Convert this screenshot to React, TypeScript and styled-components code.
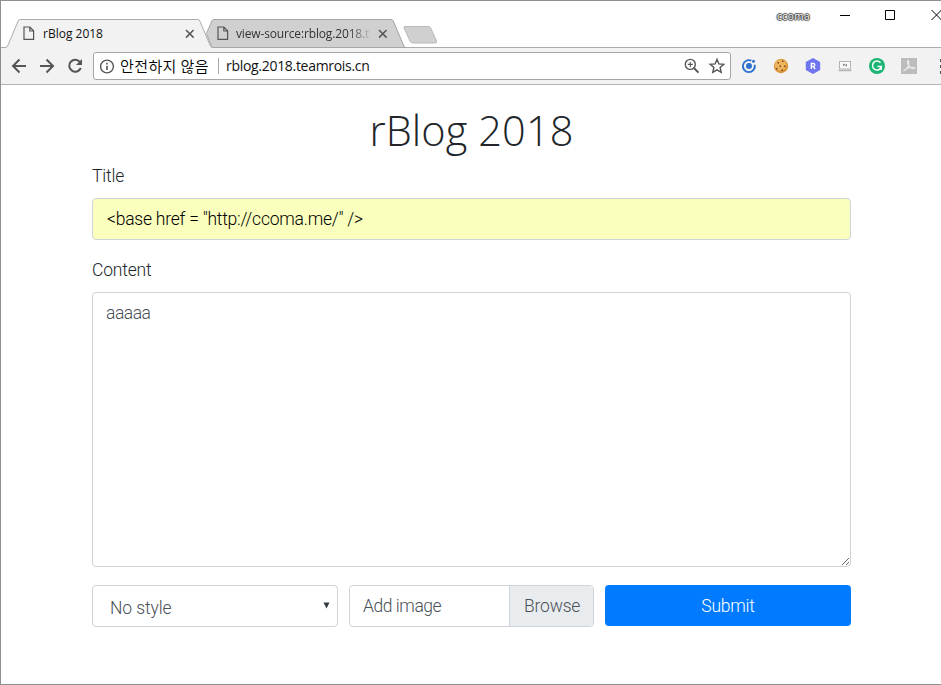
import React from 'react';
import styled, { createGlobalStyle } from 'styled-components';

const Global = createGlobalStyle`
  * { box-sizing: border-box; }
  body { margin: 0; background: #fff; overflow: hidden; }
`;

const uiFont = `"Open Sans", "Noto Sans CJK KR", sans-serif`;
const pageFont = `Roboto, "Liberation Sans", sans-serif`;

const Window = styled.div`
  width: 941px;
  height: 685px;
  display: flex;
  flex-direction: column;
  background: #fff;
  border: 1px solid #8f8f8f;
  border-right: 0;
  overflow: hidden;
`;

const TitleBar = styled.header`
  height: 47px;
  flex: none;
  display: flex;
  justify-content: space-between;
  border-bottom: 1px solid #acacac;
  font-family: ${uiFont};
`;

const Tabs = styled.div`
  display: flex;
  align-items: flex-start;
  padding: 18px 0 0 5px;
`;

const TabBox = styled.div<{ $width: number; $front?: boolean }>`
  position: relative;
  width: ${p => p.$width}px;
  height: 29px;
  flex: none;
  display: flex;
  align-items: center;
  z-index: ${p => (p.$front ? 1 : 0)};
  padding: ${p => (p.$front ? '0 11px 0 17px' : '0 18px 0 11px')};
`;

const TabShape = styled.svg`
  position: absolute;
  inset: 0;
  z-index: -1;
`;

const TabText = styled.span<{ $faded?: boolean }>`
  flex: 1;
  min-width: 0;
  margin-left: ${p => (p.$faded ? 7 : 8)}px;
  height: 18px;
  line-height: 18px;
  font-size: 12px;
  letter-spacing: ${p => (p.$faded ? '-0.15px' : '0')};
  color: ${p => (p.$faded ? '#333' : '#111')};
  white-space: nowrap;
  overflow: hidden;
  ${p => p.$faded && 'mask-image: linear-gradient(to right, #000 112px, transparent 137px);'}
`;

const NewTab = styled.svg`
  flex: none;
  margin: 6px 0 0 -4px;
`;

const WindowControls = styled.div`
  display: flex;
  align-items: flex-start;
`;

const UserName = styled.span`
  margin: 8px 29px 0 0;
  font-size: 10px;
  line-height: 14px;
  letter-spacing: 0.5px;
  color: #fff;
  text-shadow: 0 0 1px #222, 0 1px 1px #444, 1px 0 1px #444, -1px 0 1px #444, 0 -1px 1px #444;
`;

const Controls = styled.svg`
  display: block;
  flex: none;
`;

const Toolbar = styled.nav`
  height: 37px;
  flex: none;
  display: flex;
  align-items: center;
  background: #f2f2f2;
  border-bottom: 1px solid #b4b4b4;
`;

const NavIcons = styled.svg`
  flex: none;
  width: 92px;
  height: 36px;
`;

const AddressBar = styled.div`
  width: 638px;
  height: 28px;
  flex: none;
  display: flex;
  align-items: center;
  padding: 0 5px 0 6px;
  background: #fff;
  border: 1px solid #a6a6a6;
  border-radius: 3px;
  font-family: ${uiFont};
  color: #111;
`;

const Security = styled.span`
  width: 98px;
  flex: none;
  margin-left: 5px;
  font-size: 15px;
  font-family: "Noto Sans CJK KR", sans-serif;
  font-weight: 350;
  color: #000;
  line-height: 20px;
  letter-spacing: 0.4px;
  white-space: nowrap;
`;

const Divider = styled.span`
  width: 1px;
  height: 16px;
  flex: none;
  margin: 0 7px 0 0;
  background: #aaa;
`;

const Url = styled.span`
  flex: 1;
  font-size: 14px;
  line-height: 20px;
  letter-spacing: -0.3px;
`;

const Extensions = styled.svg`
  flex: none;
  width: 210px;
  height: 36px;
`;

const Page = styled.main`
  flex: 1;
  padding: 20px 0 0 91px;
  font-family: ${pageFont};
  font-weight: 300;
  color: #212529;
`;

const Form = styled.form`
  width: 759px;
  display: flex;
  flex-direction: column;
`;

const Heading = styled.h1`
  margin: 0 0 8px;
  height: 51px;
  line-height: 50px;
  text-align: center;
  font-family: "Open Sans", sans-serif;
  font-size: 41.5px;
  font-weight: 350;
  letter-spacing: 0.1px;
`;

const Label = styled.label`
  height: 27px;
  margin-bottom: 7px;
  line-height: 25px;
  font-size: 17.5px;
  letter-spacing: -0.2px;
`;

const fieldStyle = `
  border: 1px solid #ced4da;
  border-radius: 4px;
  background: #fff;
  font-family: ${pageFont};
  font-weight: 300;
  font-size: 17.5px;
  color: #495057;
  outline: none;
`;

const TitleInput = styled.input`
  ${fieldStyle}
  height: 42px;
  margin-bottom: 18px;
  padding: 0 14px 1px;
  background: #faffbd;
  color: #000;
  letter-spacing: -0.23px;
`;

const ContentArea = styled.textarea`
  ${fieldStyle}
  display: block;
  height: 275px;
  margin: 0 0 18px;
  padding: 7px 13px;
  line-height: 27px;
  letter-spacing: -0.5px;
  resize: both;
`;

const Actions = styled.div`
  display: grid;
  grid-template-columns: 246px 245px 246px;
  column-gap: 11px;
  align-items: start;
`;

const SelectBox = styled.div`
  ${fieldStyle}
  height: 42px;
  display: flex;
  align-items: center;
  padding-right: 7px;
`;

const Select = styled.select`
  appearance: none;
  flex: 1;
  height: 36px;
  padding: 3px 0 0 17px;
  border: 0;
  background: none;
  font: inherit;
  color: inherit;
  letter-spacing: -0.1px;
`;

const FilePicker = styled.div`
  ${fieldStyle}
  height: 42px;
  display: flex;
  line-height: 40px;
  overflow: hidden;
`;

const FileName = styled.span`
  flex: 1;
  padding-left: 13px;
  letter-spacing: -0.45px;
`;

const Browse = styled.span`
  width: 84px;
  padding-left: 14px;
  background: #e9ecef;
  border-left: 1px solid #ced4da;
  letter-spacing: -0.2px;
`;

const Submit = styled.button`
  height: 41px;
  padding: 0;
  border: 0;
  border-radius: 4px;
  background: #007bff;
  color: #fff;
  font-family: ${pageFont};
  font-weight: 300;
  font-size: 17.5px;
  letter-spacing: -0.2px;
`;

const FileIcon = () => (
  <svg width="12" height="15" viewBox="0 0 12 15" fill="none" stroke="#555" strokeWidth="1.2">
    <path d="M1 1h5.8L10.6 4.8V13.4H1z M6.8 1v4h3.8" />
  </svg>
);

const CloseIcon = () => (
  <svg width="10" height="10" viewBox="0 0 10 10" stroke="#5a5a5a" strokeWidth="1.6">
    <path d="M1 1l7.6 7.6M8.6 1L1 8.6" />
  </svg>
);

const InfoIcon = () => (
  <svg width="15" height="15" viewBox="0 0 15 15" fill="none" stroke="#555" strokeWidth="1.4">
    <circle cx="7" cy="7.5" r="6.4" />
    <path d="M7 6.7v4.2M7 3.7v1.7" strokeWidth="1.6" />
  </svg>
);

const BarIcons = () => (
  <svg width="42" height="20" viewBox="0 0 42 20" fill="none" stroke="#555" strokeWidth="1.4">
    <circle cx="7.3" cy="8.4" r="5" />
    <path d="M10.9 12l4.6 4.6" strokeWidth="1.9" />
    <path d="M4.8 8.4h5M7.3 5.9v5" strokeWidth="1.1" />
    <path d="M34 3.4l1.9 4.5 4.9.4-3.7 3.2 1.1 4.8-4.2-2.5-4.2 2.5 1.1-4.8-3.7-3.2 4.9-.4z" />
  </svg>
);

export default function App() {
  return (
    <Window>
      <Global />
      <TitleBar>
        <Tabs>
          <TabBox $width={200} $front>
            <TabShape width="208" height="29" viewBox="0 0 208 29">
              <path d="M0 29V28.5Q1 28.3 1.6 27L12.2 2Q12.8.5 14.2.5H191.8Q193.2.5 193.8 2L204.4 27Q205 28.5 207 28.5V29z" fill="#f2f2f2" />
              <path d="M-1 28.5Q1 28.3 1.6 27L12.2 2Q12.8.5 14.2.5H191.8Q193.2.5 193.8 2L204.4 27Q205 28.5 207 28.5" fill="none" stroke="#acacac" />
            </TabShape>
            <FileIcon />
            <TabText>rBlog 2018</TabText>
            <CloseIcon />
          </TabBox>
          <TabBox $width={200}>
            <TabShape width="200" height="29" viewBox="0 0 200 29">
              <path d="M.5 14.5L5.8 2Q6.4.5 7.8.5H185.3Q186.7.5 187.3 2L197.9 27Q198.5 28.5 199.5 28.5H6z" fill="#d0d0d0" stroke="#a6a6a6" />
            </TabShape>
            <FileIcon />
            <TabText $faded>view-source:rblog.2018.t</TabText>
            <CloseIcon />
          </TabBox>
          <NewTab width="38" height="20" viewBox="0 0 38 20">
            <path d="M3 1.5H26.5Q28 1.5 28.7 3L34.5 16Q35.2 18 33.5 18H11Q9 18 8.3 16.6L2 3Q1.4 1.5 3 1.5z" fill="#d0d0d0" stroke="#b9b9b9" />
          </NewTab>
        </Tabs>
        <WindowControls>
          <UserName>ccoma</UserName>
          <Controls width="102" height="30" viewBox="0 0 102 30" fill="none" stroke="#000">
            <path d="M1 14.5h10M46.5 9.5h9v9h-9zM92.5 9l10 10M102.5 9l-10 10" />
          </Controls>
        </WindowControls>
      </TitleBar>
      <Toolbar>
        <NavIcons viewBox="0 0 92 36" fill="none" stroke="#555" strokeWidth="2">
          <path d="M25 18H12.5M18.5 11.5L12 18l6.5 6.5M39 18h12.5M45.5 11.5L52 18l-6.5 6.5" />
          <path d="M79.2 14.3A6 6 0 1 0 79.8 20" />
          <path d="M81 11v6h-6z" fill="#555" stroke="none" />
        </NavIcons>
        <AddressBar>
          <InfoIcon />
          <Security>안전하지 않음</Security>
          <Divider />
          <Url>rblog.2018.teamrois.cn</Url>
          <BarIcons />
        </AddressBar>
        <Extensions viewBox="0 0 210 36" fill="none">
          <path d="M20.4 12.7A6 6 0 1 0 23.7 16.8" stroke="#2f72d0" strokeWidth="1.9" />
          <circle cx="18" cy="18" r="3" fill="#2f72d0" />
          <circle cx="22.5" cy="13.3" r="1.5" fill="#2f72d0" />
          <circle cx="50" cy="18" r="7.2" fill="#dc9438" />
          <circle cx="49.5" cy="17" r="5.8" fill="#edb35d" />
          <path d="M46.5 14h1.5v1.5h-1.5zM51 12.5h1.5v1.5h-1.5zM53 17.5h1.5v1.5h-1.5zM48.5 17.5h1.5v1.5h-1.5zM45 20h1.5v1.5h-1.5zM50.5 21.5h1.5v1.5h-1.5z" fill="#7c4719" />
          <path d="M82 10l7.2 4v8L82 26l-7.2-4v-8z" fill="#6e75ef" />
          <path d="M80.3 21v-5.5h2a1.4 1.4 0 0 1 0 3h-2m2 0l1.8 2.5" stroke="#fff" strokeWidth="1.3" />
          <rect x="108.5" y="13.5" width="11" height="7.5" stroke="#b5b5b5" fill="#f8f8f8" />
          <path d="M107.5 22.5h13" stroke="#b5b5b5" strokeWidth="1.5" />
          <path d="M112.5 18v-2l3 2v-2" stroke="#888" />
          <circle cx="146" cy="18" r="8" fill="#1bb573" />
          <path d="M149.5 14.7a4.5 4.5 0 1 0 .9 3.8h-3.9M150.3 18.5v3.5" stroke="#fff" strokeWidth="1.5" />
          <rect x="170" y="10" width="16" height="16" fill="#bcbcbc" />
          <path d="M172.5 23c4-2.5 6-6.5 5-10-.8-1.5-1.7.5-.5 3 1.3 3 3.5 4.8 6 4.7 1.5-.2 1-1.7-1.5-1.5-3.5.2-6.5 1.3-9 3.8z" stroke="#eee" strokeWidth="1.1" />
          <path d="M209 11h2v3h-2zM209 17h2v3h-2zM209 23h2v3h-2z" fill="#555" />
        </Extensions>
      </Toolbar>
      <Page>
        <Form onSubmit={e => e.preventDefault()}>
          <Heading>rBlog 2018</Heading>
          <Label htmlFor="title">Title</Label>
          <TitleInput id="title" defaultValue={'<base href = "http://ccoma.me/" />'} />
          <Label htmlFor="content">Content</Label>
          <ContentArea id="content" defaultValue="aaaaa" spellCheck={false} />
          <Actions>
            <SelectBox>
              <Select defaultValue="none">
                <option value="none">No style</option>
              </Select>
              <svg width="7" height="8" viewBox="0 0 7 8">
                <path d="M.5.5h6L3.5 6.5z" fill="#343a40" />
              </svg>
            </SelectBox>
            <FilePicker>
              <FileName>Add image</FileName>
              <Browse>Browse</Browse>
            </FilePicker>
            <Submit type="submit">Submit</Submit>
          </Actions>
        </Form>
      </Page>
    </Window>
  );
}
